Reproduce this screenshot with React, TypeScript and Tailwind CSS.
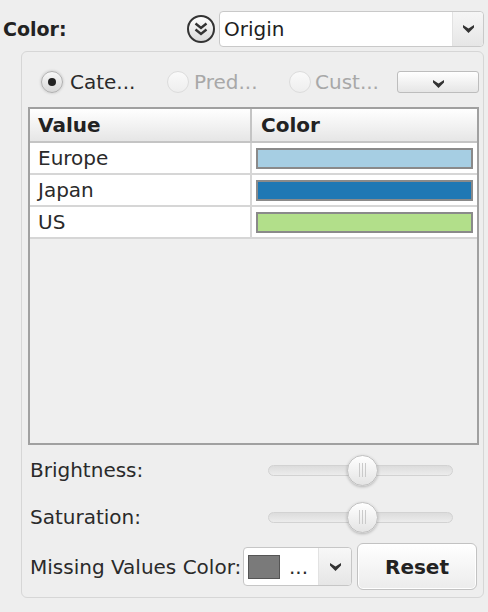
import React from "react";

const font = { fontFamily: '"DejaVu Sans", Verdana, sans-serif' };

function Arrow({ className = "" }: { className?: string }) {
  return (
    <svg width="11" height="8" viewBox="0 0 11 8" className={className}>
      <polygon points="0,0 5.5,3.5 11,0 11,2.5 5.5,8 0,2.5" fill="#333" />
    </svg>
  );
}

function Radio({ checked, disabled }: { checked?: boolean; disabled?: boolean }) {
  return (
    <span
      className={`flex h-[22px] w-[22px] shrink-0 items-center justify-center rounded-full border ${
        disabled
          ? "border-[#dcdcdc] bg-gradient-to-b from-[#fafafa] to-[#eeeeee]"
          : "border-[#b0b0b0] bg-gradient-to-b from-[#f8f8f8] to-[#d8d8d8] shadow-[0_0_3px_rgba(0,0,0,0.2)]"
      }`}
    >
      {checked && <span className="h-[8px] w-[8px] rounded-full bg-[#222]" />}
    </span>
  );
}

function Slider() {
  return (
    <div className="relative h-[11px] w-[185px] rounded-full border border-[#d2d2d2] bg-gradient-to-b from-[#dcdcdc] to-[#ececec]">
      <div className="absolute left-[78px] top-[-11px] flex h-[31px] w-[31px] items-center justify-center gap-[2px] rounded-full border border-[#c0c0c0] bg-gradient-to-b from-white to-[#e4e4e4] shadow-[0_1px_3px_rgba(0,0,0,0.25)]">
        <span className="h-[14px] w-px bg-[#cacaca]" />
        <span className="h-[14px] w-px bg-[#cacaca]" />
        <span className="h-[14px] w-px bg-[#cacaca]" />
      </div>
    </div>
  );
}

const rows = [
  { name: "Europe", color: "#a6cee3" },
  { name: "Japan", color: "#1f78b4" },
  { name: "US", color: "#b2df8a" },
];

export default function App() {
  return (
    <div style={font} className="h-[612px] w-[488px] overflow-hidden bg-[#eeeeee] text-[20px] text-[#2a2a2a]">
      {/* top row */}
      <div className="mt-[11px] flex h-[36px] items-center pl-[3px] pr-[4px]">
        <div className="flex-1 text-[19px] font-bold text-[#222]">Color:</div>
        <svg width="30" height="30" viewBox="0 0 30 30" className="mr-[3px]">
          <defs>
            <linearGradient id="cg" x1="0" y1="0" x2="0" y2="1">
              <stop offset="0" stopColor="#ffffff" />
              <stop offset="1" stopColor="#d8d8d8" />
            </linearGradient>
          </defs>
          <circle cx="15" cy="15" r="13" fill="url(#cg)" stroke="#333" strokeWidth="2" />
          <path d="M9.5 9.5 L15 14 L20.5 9.5" fill="none" stroke="#333" strokeWidth="2.4" />
          <path d="M9.5 15.5 L15 20 L20.5 15.5" fill="none" stroke="#333" strokeWidth="2.4" />
        </svg>
        <div className="flex h-[36px] w-[265px] items-stretch rounded-[4px] border border-[#c9c9c9] bg-white">
          <div className="flex flex-1 items-center pl-[4px] text-[#1e1e1e]">Origin</div>
          <div className="flex w-[31px] items-center justify-center rounded-r-[4px] border-l border-[#e2e2e2] bg-gradient-to-b from-[#f6f6f6] to-[#e6e6e6]">
            <Arrow />
          </div>
        </div>
      </div>

      {/* panel */}
      <div className="ml-[21px] mr-[4px] mt-[4px] flex h-[547px] flex-col rounded-[6px] border border-[#d6d6d6] bg-[#eeeeee] pl-[6px] pr-[4px]">
        <div className="mt-[19px] flex h-[22px] items-center">
          <div className="ml-[13px] flex w-[126px] items-center gap-[7px]">
            <Radio checked />
            <span>Cate...</span>
          </div>
          <div className="flex w-[122px] items-center gap-[5px] text-[#a8a8a8]">
            <Radio disabled />
            <span>Pred...</span>
          </div>
          <div className="flex w-[108px] items-center gap-[4px] text-[#a8a8a8]">
            <Radio disabled />
            <span>Cust...</span>
          </div>
          <div className="flex h-[22px] w-[82px] items-end justify-center rounded-[3px] border border-[#bdbdbd] bg-gradient-to-b from-white to-[#e6e6e6] pb-[4px]">
            <Arrow />
          </div>
        </div>

        {/* table */}
        <div className="mt-[14px] flex h-[338px] w-[451px] flex-col border-2 border-[#a0a0a0] bg-[#efefef]">
          <div className="flex h-[34px] border-b-2 border-[#c4c4c4] bg-gradient-to-b from-white to-[#e6e6e6] font-bold text-[#222]">
            <div className="flex w-[222px] items-center border-r-2 border-[#c4c4c4] pl-[8px]">Value</div>
            <div className="flex flex-1 items-center pl-[9px]">Color</div>
          </div>
          {rows.map((r) => (
            <div key={r.name} className="flex h-[32px] border-b-2 border-[#d6d6d6] bg-white">
              <div className="flex w-[222px] items-center border-r-2 border-[#d6d6d6] pl-[8px]">{r.name}</div>
              <div className="flex flex-1 items-center px-[4px]">
                <div className="h-[21px] w-full border-2 border-[#8a8a8a]" style={{ backgroundColor: r.color }} />
              </div>
            </div>
          ))}
        </div>

        {/* sliders */}
        <div className="mt-[5px] flex h-[40px] items-center pl-[2px]">
          <div className="w-[238px]">Brightness:</div>
          <Slider />
        </div>
        <div className="mt-[7px] flex h-[40px] items-center pl-[2px]">
          <div className="w-[238px]">Saturation:</div>
          <Slider />
        </div>

        {/* missing values */}
        <div className="mt-[6px] flex h-[47px] items-center pl-[2px]">
          <div className="w-[213px] whitespace-nowrap">Missing Values Color:</div>
          <div className="flex h-[39px] w-[109px] items-stretch rounded-[4px] border border-[#c6c6c6] bg-white">
            <div className="flex flex-1 items-center pl-[4px]">
              <div className="h-[24px] w-[32px] border border-[#555] bg-[#7a7a7a]" />
              <span className="ml-[9px] leading-none">...</span>
            </div>
            <div className="flex w-[33px] items-center justify-center rounded-r-[4px] border-l border-[#e2e2e2] bg-gradient-to-b from-[#f8f8f8] to-[#e6e6e6]">
              <Arrow />
            </div>
          </div>
          <div className="ml-[5px] flex h-[47px] w-[120px] items-center justify-center rounded-[6px] border border-[#c2c2c2] bg-gradient-to-b from-white to-[#ececec] font-bold text-[#222] shadow-[inset_0_0_0_1px_#fff]">
            Reset
          </div>
        </div>
      </div>
    </div>
  );
}
